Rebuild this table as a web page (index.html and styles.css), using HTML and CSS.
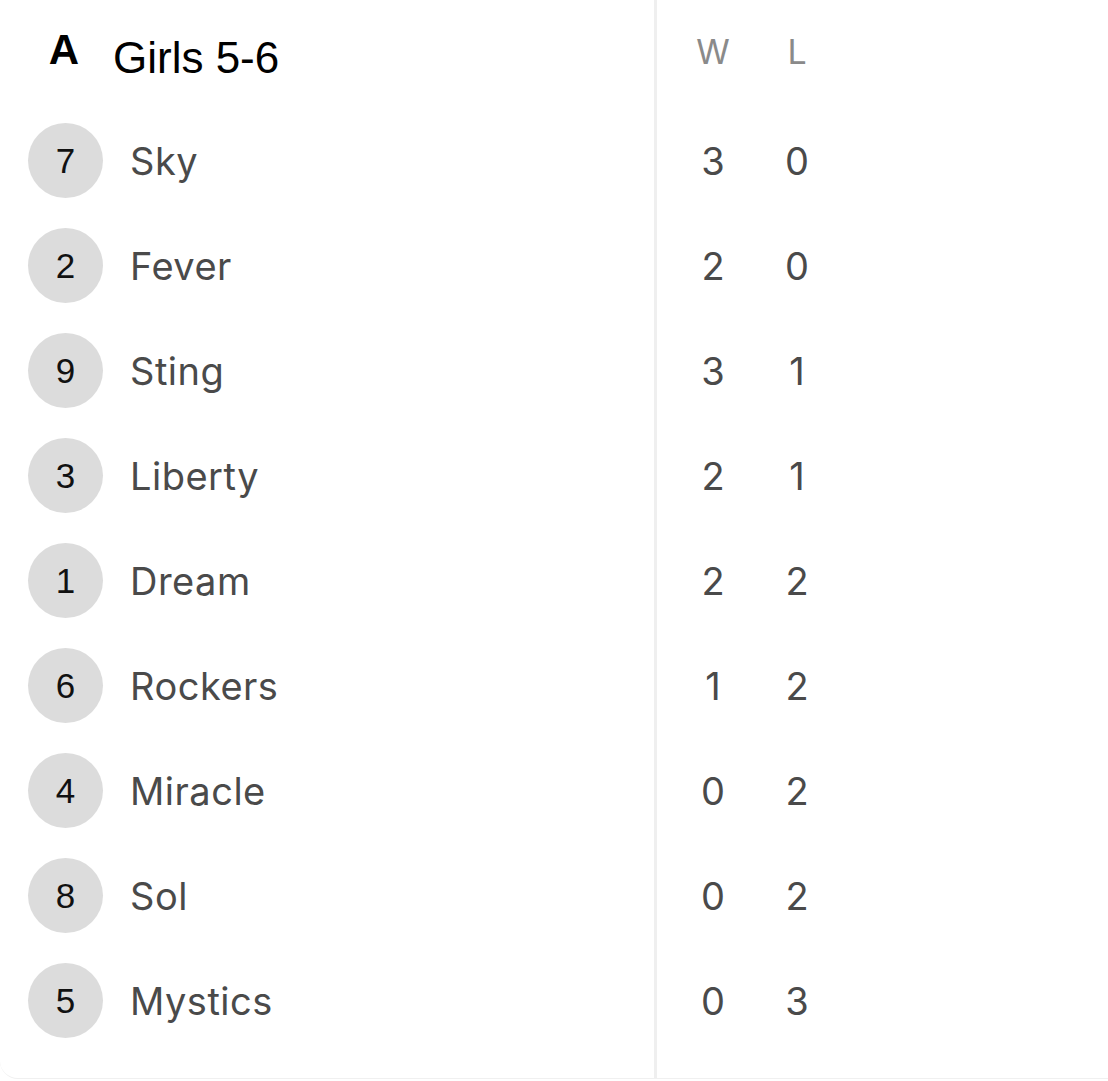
FILE: index.html
```html
<!DOCTYPE html>
<html>
<head>
<meta charset="utf-8">
<link rel="stylesheet" href="styles.css">
</head>
<body>
<div class="card">
  <div class="teams">
    <div class="head-left">
      <span class="letter">A</span>
      <span class="title">Girls 5-6</span>
    </div>
    <div class="row"><span class="seed">7</span><span class="name">Sky</span></div>
    <div class="row"><span class="seed">2</span><span class="name">Fever</span></div>
    <div class="row"><span class="seed">9</span><span class="name">Sting</span></div>
    <div class="row"><span class="seed">3</span><span class="name">Liberty</span></div>
    <div class="row"><span class="seed">1</span><span class="name">Dream</span></div>
    <div class="row"><span class="seed">6</span><span class="name">Rockers</span></div>
    <div class="row"><span class="seed">4</span><span class="name">Miracle</span></div>
    <div class="row"><span class="seed">8</span><span class="name">Sol</span></div>
    <div class="row"><span class="seed">5</span><span class="name">Mystics</span></div>
  </div>
  <div class="record">
    <div class="head-right"><span class="col">W</span><span class="col">L</span></div>
    <div class="row"><span class="col num">3</span><span class="col num">0</span></div>
    <div class="row"><span class="col num">2</span><span class="col num">0</span></div>
    <div class="row"><span class="col num">3</span><span class="col num">1</span></div>
    <div class="row"><span class="col num">2</span><span class="col num">1</span></div>
    <div class="row"><span class="col num">2</span><span class="col num">2</span></div>
    <div class="row"><span class="col num">1</span><span class="col num">2</span></div>
    <div class="row"><span class="col num">0</span><span class="col num">2</span></div>
    <div class="row"><span class="col num">0</span><span class="col num">2</span></div>
    <div class="row"><span class="col num">0</span><span class="col num">3</span></div>
  </div>
</div>
</body>
</html>
```

FILE: styles.css
```css
html, body {
  margin: 0;
  padding: 0;
  background: #ffffff;
}

body {
  font-family: "Inter", "Liberation Sans", sans-serif;
}

.card {
  display: flex;
  width: 1108px;
  height: 1079px;
  border-bottom: 1px solid #f0f0f0;
  border-bottom-left-radius: 18px;
  box-sizing: border-box;
}

.teams {
  width: 657px;
  border-right: 3px solid #efefef;
  box-sizing: border-box;
  padding-left: 28px;
}

.head-left {
  height: 108px;
  display: flex;
  align-items: center;
}

.letter {
  width: 72px;
  text-align: center;
  font-family: "Liberation Sans", sans-serif;
  font-weight: 700;
  font-size: 42px;
  color: #000;
  margin-top: -8px;
}

.title {
  margin-left: 13px;
  font-family: "Liberation Sans", sans-serif;
  font-size: 44px;
  color: #000;
  margin-top: 8px;
}

.row {
  height: 105px;
  display: flex;
  align-items: center;
}

.seed {
  width: 75px;
  height: 75px;
  border-radius: 50%;
  background: #dcdcdc;
  display: flex;
  align-items: center;
  justify-content: center;
  font-family: "Liberation Sans", sans-serif;
  font-size: 35px;
  color: #111;
  flex: none;
}

.name {
  margin-left: 27px;
  font-size: 38px;
  color: #4a4a4a;
  letter-spacing: 0.5px;
}

.record {
  padding-left: 14px;
}

.head-right {
  height: 108px;
  display: flex;
  align-items: center;
}

.head-right .col {
  font-size: 34px;
  color: #8a8a8a;
  margin-top: -6px;
}

.col {
  width: 84px;
  text-align: center;
}

.num {
  font-size: 38px;
  color: #4a4a4a;
}
```
